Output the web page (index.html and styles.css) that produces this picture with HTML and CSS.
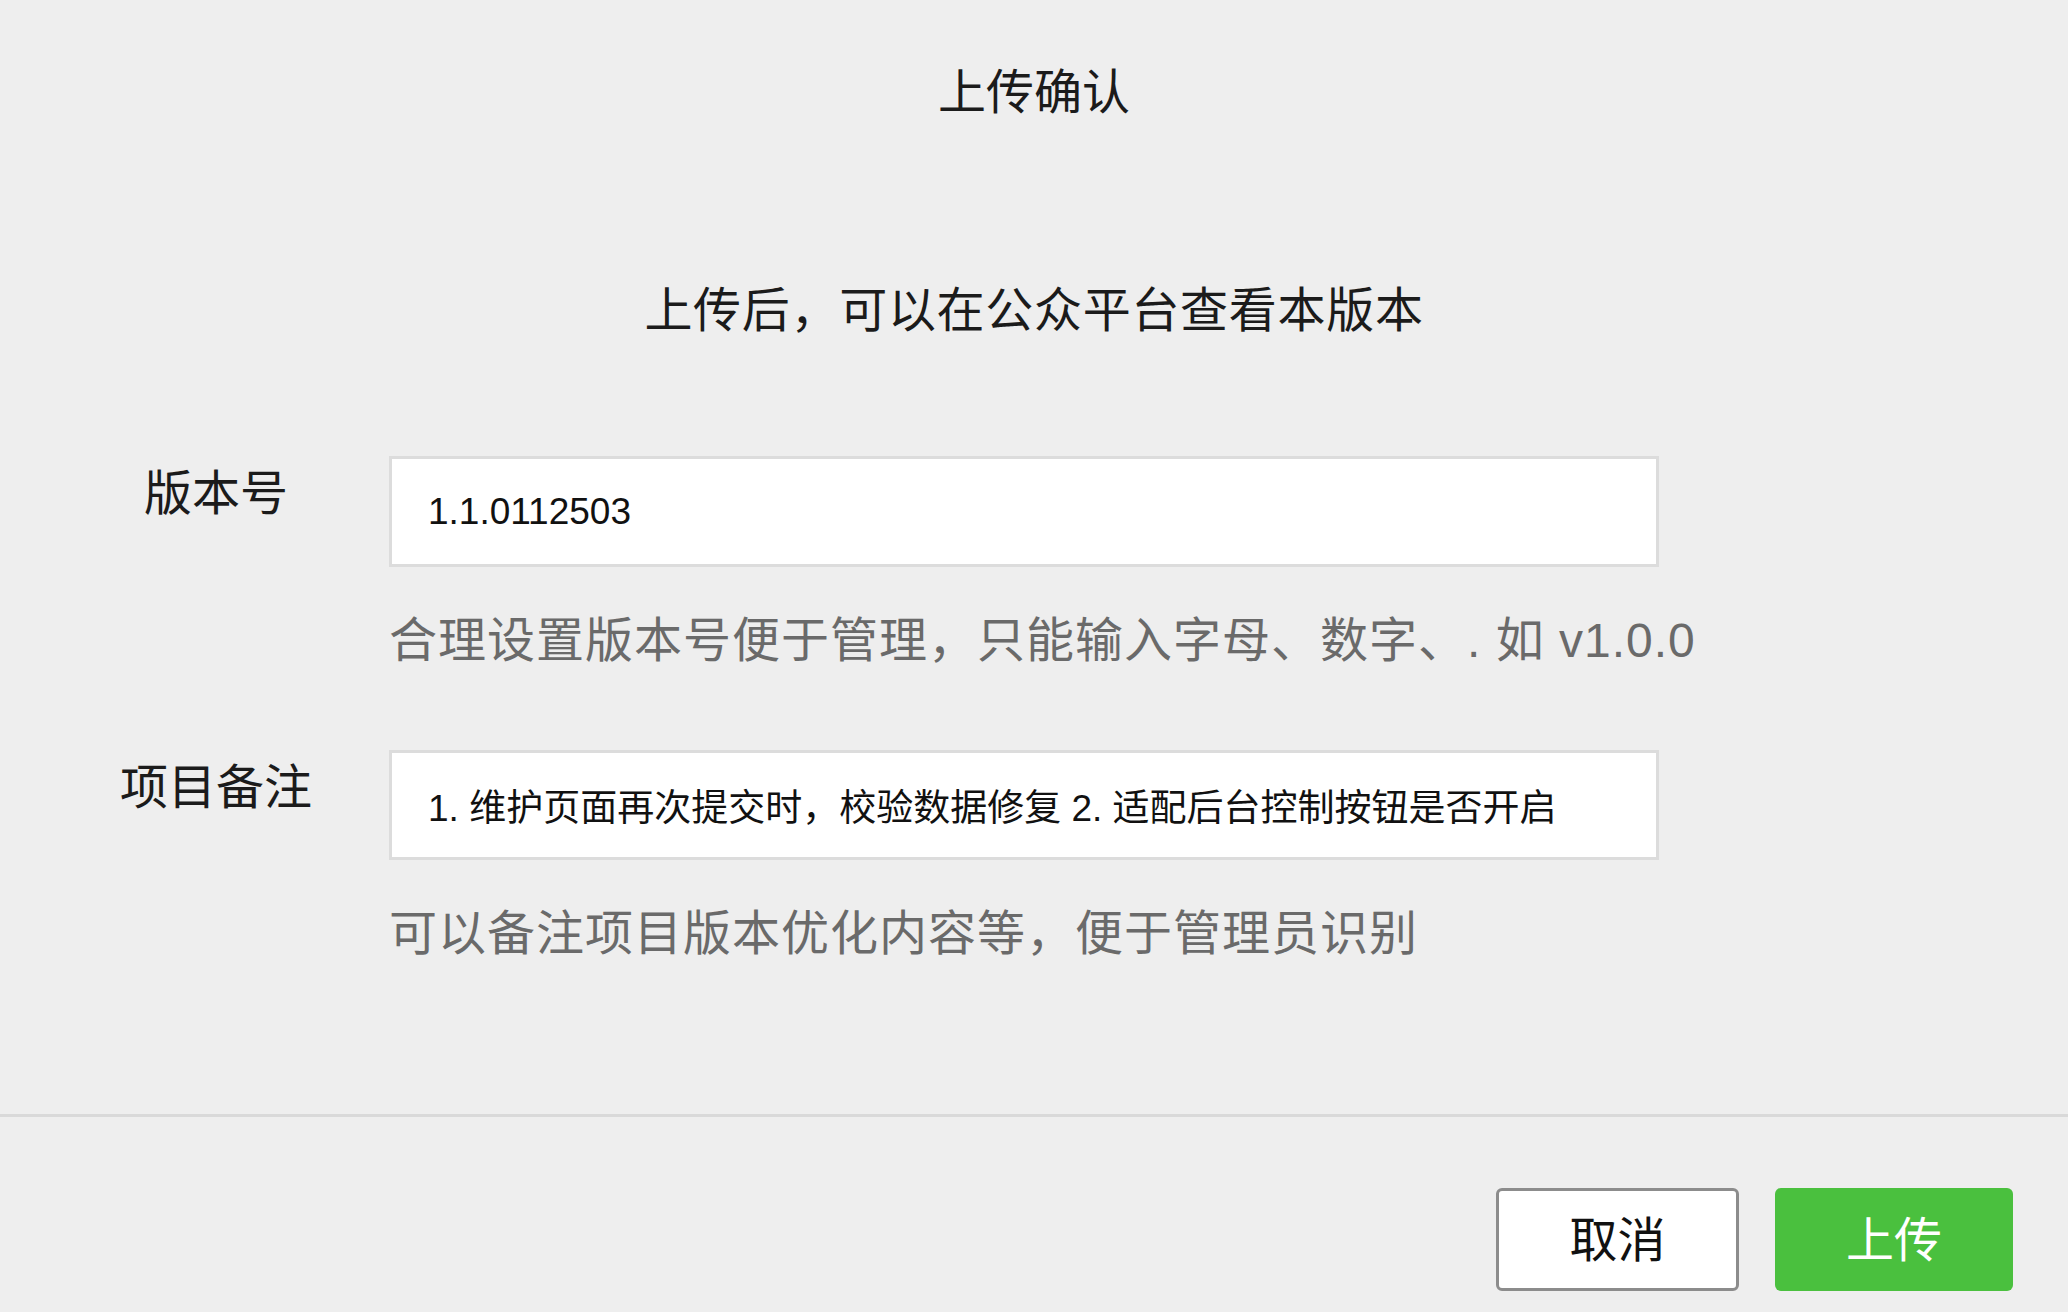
FILE: index.html
```html
<!DOCTYPE html>
<html lang="zh-CN">
<head>
    <meta charset="UTF-8">
    <meta name="viewport" content="width=device-width, initial-scale=1.0">
    <title>上传确认</title>
    <link rel="stylesheet" href="styles.css">
</head>
<body>
    <div class="dialog">
        <h1 class="title">上传确认</h1>
        <p class="intro">上传后，可以在公众平台查看本版本</p>

        <div class="form">
            <div class="field">
                <label for="version">版本号</label>
                <div class="control">
                    <input type="text" id="version" value="1.1.0112503">
                    <p class="hint">合理设置版本号便于管理，只能输入字母、数字、. 如 v1.0.0</p>
                </div>
            </div>
            <div class="field field-note">
                <label for="note">项目备注</label>
                <div class="control">
                    <input type="text" id="note" value="1. 维护页面再次提交时，校验数据修复 2. 适配后台控制按钮是否开启">
                    <p class="hint">可以备注项目版本优化内容等，便于管理员识别</p>
                </div>
            </div>
        </div>

        <div class="footer">
            <button class="btn">取消</button>
            <button class="btn btn-primary">上传</button>
        </div>
    </div>
</body>
</html>
```

FILE: styles.css
```css
body {
    margin: 0;
    background-color: #eeeeee;
    font-family: "Liberation Sans", "Noto Sans CJK SC", sans-serif;
    color: #1b1b1b;
}
.dialog {
    height: 100vh;
    display: flex;
    flex-direction: column;
}
.title {
    margin: 63px 0 0;
    font-size: 48px;
    font-weight: normal;
    line-height: 60px;
    text-align: center;
}
.intro {
    margin: 158px 0 0;
    font-size: 48px;
    line-height: 60px;
    letter-spacing: 0.7px;
    text-align: center;
}
.form {
    margin-top: 115px;
}
.field {
    display: flex;
    align-items: flex-start;
}
.field-note {
    margin-top: 79px;
}
label {
    width: 240px;
    margin-left: 96px;
    margin-right: 53px;
    font-size: 48px;
    line-height: 76px;
    text-align: center;
}
.control {
    width: 1270px;
}
input {
    display: block;
    box-sizing: border-box;
    width: 100%;
    height: 111px;
    padding: 0 20px 0 36px;
    border: 3px solid #dcdcdc;
    background-color: white;
    font-family: inherit;
    font-size: 37px;
    color: #111;
    outline: none;
}
.field-note input {
    height: 110px;
}
.hint {
    margin: 44px 0 0;
    font-size: 48px;
    line-height: 60px;
    letter-spacing: 1px;
    color: #6a6a6a;
    white-space: nowrap;
}
.footer {
    margin-top: auto;
    border-top: 3px solid #d9d9d9;
    padding: 71px 55px 21px 0;
    display: flex;
    justify-content: flex-end;
    gap: 36px;
}
.btn {
    box-sizing: border-box;
    width: 243px;
    height: 103px;
    padding: 0 0 8px;
    border: 3px solid #8c8c8c;
    border-radius: 6px;
    background-color: white;
    font-family: inherit;
    font-size: 48px;
    color: #111;
    cursor: pointer;
}
.btn-primary {
    width: 238px;
    border: none;
    background-color: #4ac03e;
    color: white;
}
```
